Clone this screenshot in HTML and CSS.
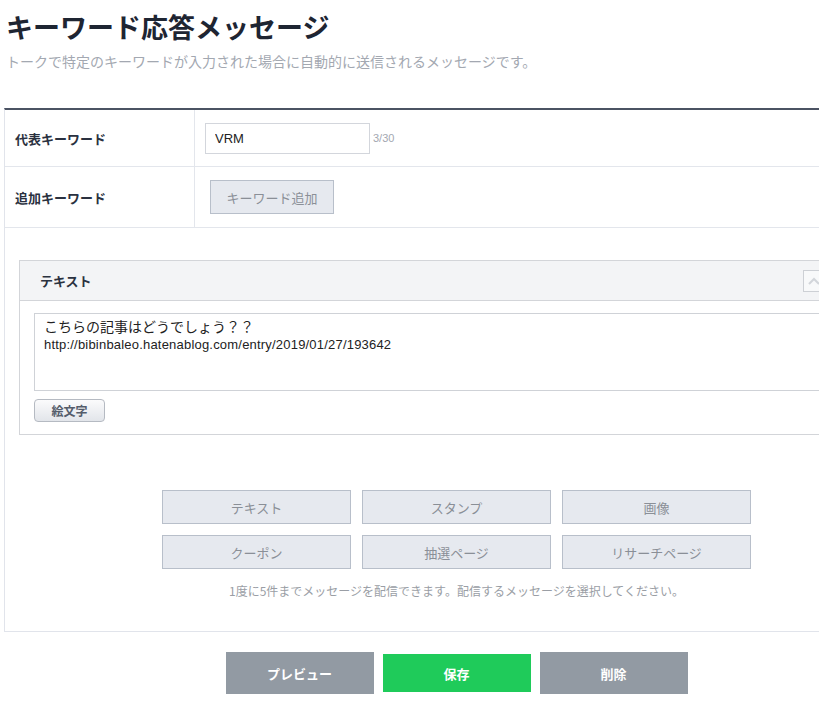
FILE: index.html
```html
<!DOCTYPE html>
<html lang="ja">
<head>
    <meta charset="UTF-8">
    <meta name="viewport" content="width=device-width, initial-scale=1.0">
    <title>キーワード応答メッセージ</title>
    <link rel="stylesheet" href="styles.css">
</head>
<body>
    <div class="page">
        <h1 class="title">キーワード応答メッセージ</h1>
        <p class="lead">トークで特定のキーワードが入力された場合に自動的に送信されるメッセージです。</p>

        <div class="form">
            <div class="row row-main">
                <div class="label">代表キーワード</div>
                <div class="field">
                    <input type="text" class="keyword" value="VRM">
                    <span class="count">3/30</span>
                </div>
            </div>
            <div class="row row-extra">
                <div class="label">追加キーワード</div>
                <div class="field">
                    <button type="button" class="btn-light add">キーワード追加</button>
                </div>
            </div>

            <div class="messages">
                <div class="panel">
                    <div class="panel-head">
                        <span class="panel-title">テキスト</span>
                        <button type="button" class="fold">
                            <svg width="12" height="8" viewBox="0 0 12 8"><polyline points="1,7 6,2 11,7" fill="none" stroke="#d2d5da" stroke-width="2"/></svg>
                        </button>
                    </div>
                    <div class="panel-body">
                        <div class="textbox"><span class="jp">こちらの記事はどうでしょう？？</span><br>http://bibinbaleo.hatenablog.com/entry/2019/01/27/193642</div>
                        <button type="button" class="emoji">絵文字</button>
                    </div>
                </div>

                <div class="types">
                    <button type="button" class="btn-light">テキスト</button>
                    <button type="button" class="btn-light">スタンプ</button>
                    <button type="button" class="btn-light">画像</button>
                    <button type="button" class="btn-light">クーポン</button>
                    <button type="button" class="btn-light">抽選ページ</button>
                    <button type="button" class="btn-light">リサーチページ</button>
                </div>
                <p class="note">1度に5件までメッセージを配信できます。配信するメッセージを選択してください。</p>
            </div>
        </div>

        <div class="actions">
            <button type="button" class="btn-gray">プレビュー</button>
            <button type="button" class="btn-green">保存</button>
            <button type="button" class="btn-gray">削除</button>
        </div>
    </div>
</body>
</html>
```

FILE: styles.css
```css
html, body {
    overflow-x: hidden;
}
body {
    margin: 0;
    font-family: "Noto Sans CJK JP", "Liberation Sans", sans-serif;
    color: #1e2532;
    background: #fff;
}
button {
    font-family: inherit;
    cursor: pointer;
}
.page {
    width: 905px;
    padding: 0 0 0 4px;
}
.title {
    margin: 0;
    padding: 9px 0 0 2px;
    font-size: 27px;
    line-height: 36px;
    font-weight: bold;
    color: #1e2532;
}
.lead {
    margin: 6px 0 0 2px;
    font-size: 14px;
    line-height: 20px;
    color: #a3a8b1;
}
.form {
    margin-top: 37px;
    border-top: 2px solid #4b5363;
    border-left: 1px solid #e1e4eb;
    border-bottom: 1px solid #e1e4eb;
}
.row {
    display: flex;
    border-bottom: 1px solid #e3e6ec;
}
.row-main {
    height: 56px;
}
.row-extra {
    height: 60px;
}
.label {
    width: 179px;
    padding-left: 10px;
    border-right: 1px solid #e3e6ec;
    display: flex;
    align-items: center;
    font-size: 13px;
    font-weight: bold;
    color: #2a3140;
}
.field {
    display: flex;
    align-items: center;
    padding-left: 10px;
}
.keyword {
    width: 165px;
    height: 31px;
    box-sizing: border-box;
    border: 1px solid #d3d6dc;
    padding: 0 9px;
    font-family: "Liberation Sans", sans-serif;
    font-size: 13px;
    color: #222;
    outline: none;
}
.count {
    margin-left: 3px;
    font-family: "Liberation Sans", sans-serif;
    font-size: 11px;
    color: #a3a8b1;
}
.btn-light {
    height: 34px;
    border: 1px solid #b8bfca;
    background: #e6e9ef;
    color: #8a8f97;
    font-size: 13px;
}
.add {
    margin-left: 5px;
    width: 124px;
    padding: 0;
}
.messages {
    padding: 32px 0 0 14px;
    height: 371px;
}
.panel {
    width: 815px;
    border: 1px solid #d3d5d9;
}
.panel-head {
    height: 39px;
    background: #f3f4f6;
    border-bottom: 1px solid #d3d5d9;
    display: flex;
    align-items: center;
    justify-content: space-between;
    padding: 0 10px 0 20px;
}
.panel-title {
    font-size: 13px;
    font-weight: bold;
    color: #2a3140;
}
.fold {
    width: 22px;
    height: 22px;
    padding: 0;
    border: 1px solid #cdd0d5;
    background: #f8f9fa;
    display: flex;
    align-items: center;
    justify-content: center;
}
.panel-body {
    padding: 12px 14px 12px 14px;
}
.textbox {
    height: 78px;
    box-sizing: border-box;
    border: 1px solid #cfd2d7;
    padding: 5px 9px;
    font-family: "Liberation Sans", "Noto Sans CJK JP", sans-serif;
    font-size: 13px;
    letter-spacing: 0.2px;
    line-height: 17px;
    color: #222;
}
.textbox .jp {
    font-size: 14px;
    letter-spacing: 0;
}
.emoji {
    display: block;
    margin-top: 8px;
    width: 71px;
    height: 23px;
    padding: 0;
    border: 1px solid #b5bac2;
    border-radius: 4px;
    background: linear-gradient(#fbfbfc, #e2e5ea);
    font-size: 12px;
    font-weight: bold;
    color: #555d6b;
}
.types {
    margin: 55px 0 0 143px;
    width: 589px;
    display: grid;
    grid-template-columns: repeat(3, 189px);
    gap: 11px 11px;
}
.note {
    margin: 14px 0 0 143px;
    width: 589px;
    text-align: center;
    font-size: 12px;
    line-height: 16px;
    color: #9a9ea5;
}
.actions {
    display: flex;
    justify-content: center;
    align-items: center;
    gap: 9px;
    margin-top: 20px;
}
.btn-gray, .btn-green {
    width: 148px;
    border: none;
    color: #fff;
    font-size: 13px;
    font-weight: bold;
}
.btn-gray {
    height: 42px;
    background: #929aa3;
}
.btn-green {
    height: 38px;
    background: #1fcb5a;
}
```
